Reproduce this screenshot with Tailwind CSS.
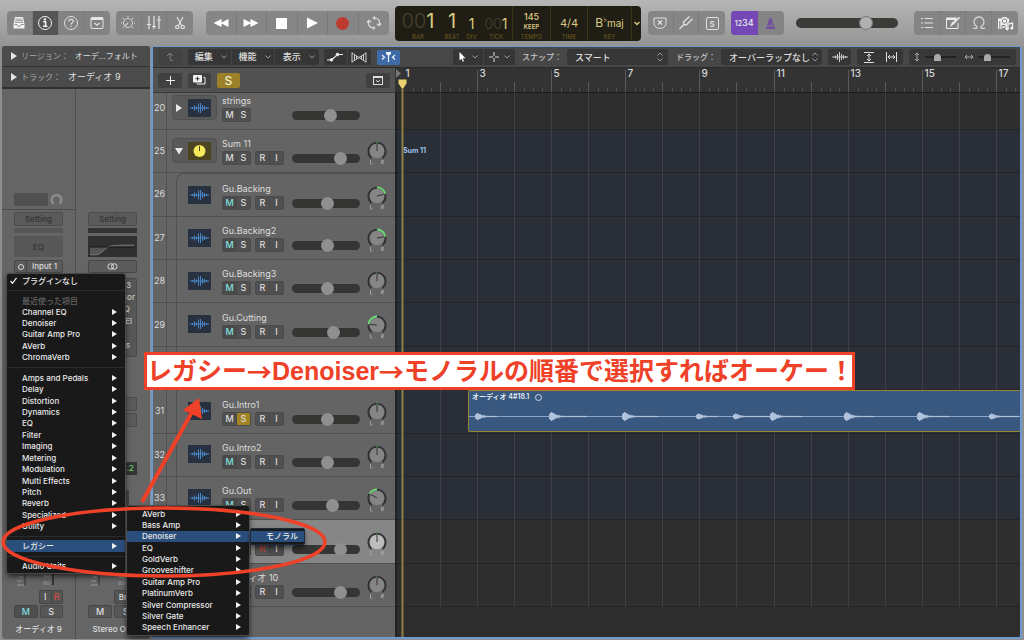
<!DOCTYPE html>
<html lang="ja">
<head>
<meta charset="utf-8">
<title>Logic Pro</title>
<script src="https://cdn.jsdelivr.net/npm/@tailwindcss/browser@4"></script>
</head>
<body class="relative flex min-h-screen flex-col overflow-hidden bg-[#8e8e8e] font-['Inter','Noto_Sans_CJK_JP',sans-serif] text-[#dedede]">

<!-- Control bar -->
<header class="flex h-[46px] shrink-0 items-center bg-linear-to-b from-[#b6b6b6] to-[#949494] pl-[7px] pr-[6px]">
  <div class="grid h-6 w-[103px] grid-cols-4 divide-x divide-[#7b7b7b] overflow-hidden rounded bg-[#838383] text-[#e4e4e4]">
    <button aria-label="ライブラリ" class="grid place-items-center"><svg width="14" height="14" viewBox="0 0 14 14"><path d="M3 1h8l1.500 7v4.500h-11V8z" fill="#f4f4f4"/><path d="M3.500 3h7M3 4.700h8M2.600 6.400h8.800M2 8.500h3q0 2 2 2t2-2h3" fill="none" stroke="#808080" stroke-width=".8"/></svg></button>
    <button aria-label="インスペクタ" class="grid place-items-center bg-[#555]"><svg width="16" height="16" viewBox="0 0 16 16"><circle cx="8" cy="8" r="6.500" fill="none" stroke="#f0f0f0"/><path d="M6.200 6.800h2.400v4.200M6 11.200h4.400" fill="none" stroke="#f4f4f4" stroke-width="1.600"/><circle cx="7.900" cy="4.400" r="1.200" fill="#f4f4f4"/></svg></button>
    <button aria-label="ヘルプ" class="grid place-items-center"><svg width="16" height="16" viewBox="0 0 16 16" fill="none" stroke="#e0e0e0"><circle cx="8" cy="8" r="6.500"/><path d="M5.800 6.500q0-2.200 2.200-2.200t2.200 1.900q0 1-1.100 1.700T8 9.600" stroke-width="1.200"/><path d="M8 10.800v1.300" stroke-width="1.300"/></svg></button>
    <button aria-label="ツールバー" class="grid place-items-center"><svg width="14" height="14" viewBox="0 0 14 14" fill="none" stroke="#e6e6e6"><rect x="1" y="1.500" width="12" height="11" rx="1"/><path d="M1 3h12" stroke-width="2"/><path d="M4.500 7l2.500 2.300L9.500 7" stroke-width="1.200"/></svg></button>
  </div>
  <div class="ml-[6px] grid h-6 w-[77px] grid-cols-3 divide-x divide-[#7b7b7b] rounded bg-[#838383]">
    <button aria-label="Smart Control" class="grid place-items-center"><svg width="18" height="16" viewBox="0 0 18 16" fill="none" stroke="#d8d8d8"><circle cx="9" cy="8" r="4.500"/><path d="M9 8l-3.200 3.200" stroke-width="1.200"/><path d="M2 8h1M15 8h1M4 3l.8.800M14 3l-.8.800M4 13l.8-.8M14 13l-.8-.8M9 1v1" stroke-width="1.200"/></svg></button>
    <button aria-label="ミキサー" class="grid place-items-center"><svg width="16" height="16" viewBox="0 0 16 16" stroke="#e4e4e4" stroke-width="1.200"><path d="M3 1v13M8 1v13M13 1v13M1 9.500h4M6 11.500h4M11 5h4"/></svg></button>
    <button aria-label="エディタ" class="grid place-items-center"><svg width="14" height="14" viewBox="0 0 14 14" fill="none" stroke="#e0e0e0" stroke-width="1.200"><path d="M4 1l4.500 8.500M10 1L5.500 9.500"/><circle cx="4.300" cy="11" r="1.700"/><circle cx="9.700" cy="11" r="1.700"/></svg></button>
  </div>
  <div class="ml-[13px] grid h-6 w-[183px] grid-cols-6 divide-x divide-[#7b7b7b] rounded bg-[#868686]">
    <button aria-label="巻き戻し" class="grid place-items-center"><svg width="16" height="10" viewBox="0 0 16 10" fill="#fff"><path d="M8.500 1v8L.5 5zM15.500 1v8L7.500 5z"/></svg></button>
    <button aria-label="早送り" class="grid place-items-center"><svg width="16" height="10" viewBox="0 0 16 10" fill="#fff"><path d="M.5 1v8l8-4zM7.500 1v8l8-4z"/></svg></button>
    <button aria-label="停止" class="grid place-items-center"><span class="size-[11px] bg-white"></span></button>
    <button aria-label="再生" class="grid place-items-center"><svg width="12" height="12" viewBox="0 0 12 12" fill="#fff"><path d="M1 .5v11L12 6z"/></svg></button>
    <button aria-label="録音" class="grid place-items-center"><span class="size-[13px] rounded-full bg-[#bd3b30]"></span></button>
    <button aria-label="サイクル" class="grid place-items-center"><svg width="16" height="16" viewBox="0 0 16 16" fill="none" stroke="#dcdcdc" stroke-width="1.200"><path d="M8.500 13H7A5 5 0 0 1 2.800 6M7.500 3H9A5 5 0 0 1 13.200 10"/><path d="M1 7.500l1.900-2.200L5 7.300M11 8.700l2.100 2L15 8.500M7 11.500L8.700 13 7 14.500M9 1.500L7.300 3 9 4.500"/></svg></button>
  </div>

  <!-- LCD -->
  <div class="ml-[6px] flex h-[35px] w-[246px] rounded bg-[#201e14] text-center text-[#dccb83]">
    <div class="flex w-[46px] flex-col items-center justify-between pb-[1px]"><span class="h-[27px] text-[20px] leading-[30px]"><span class="font-light text-[#454130]">00</span>1</span><span class="text-[6px] leading-[7px] text-[#6a5a22]">BAR</span></div>
    <div class="flex w-[22px] flex-col items-center justify-between pb-[1px]"><span class="h-[27px] text-[20px] leading-[30px]">1</span><span class="text-[6px] leading-[7px] text-[#6a5a22]">BEAT</span></div>
    <div class="flex w-[17px] flex-col items-center justify-between pb-[1px]"><span class="h-[27px] text-[14px] leading-[35px]">1</span><span class="text-[6px] leading-[7px] text-[#6a5a22]">DIV</span></div>
    <div class="flex w-[32px] flex-col items-center justify-between pb-[1px]"><span class="h-[27px] text-[14px] leading-[35px]"><span class="font-light text-[#454130]">00</span>1</span><span class="text-[6px] leading-[7px] text-[#6a5a22]">TICK</span></div>
    <div class="flex w-[38px] flex-col items-center justify-between border-l border-[#39331a] pb-[1px] pt-[5px]"><span class="text-[9px] font-medium leading-[11px]">145</span><span class="text-[6px] font-semibold leading-[10px]">KEEP</span><span class="text-[6px] leading-[7px] text-[#6a5a22]">TEMPO</span></div>
    <div class="flex w-[37px] flex-col items-center justify-between border-l border-[#39331a] pb-[1px]"><span class="h-[27px] text-[11px] leading-[34px]">4/4</span><span class="text-[6px] leading-[7px] text-[#6a5a22]">TIME</span></div>
    <div class="flex w-[44px] flex-col items-center justify-between border-l border-[#39331a] pb-[1px]"><span class="flex h-[27px] items-baseline text-[12px] leading-[34px]">B<span class="self-start font-['DejaVu_Sans'] text-[8px] leading-[28px]">♭</span><span class="text-[10px]">maj</span></span><span class="text-[6px] leading-[7px] text-[#6a5a22]">KEY</span></div>
    <button aria-label="表示モード" class="grid flex-1 place-items-center border-l border-[#39331a]"><svg width="6" height="5" viewBox="0 0 6 5" fill="none" stroke="#dccb83" stroke-width="1.300"><path d="M.5 1L3 3.500 5.500 1"/></svg></button>
  </div>

  <div class="ml-[7px] grid h-6 w-[77px] grid-cols-3 divide-x divide-[#7b7b7b] rounded bg-[#868686]">
    <button aria-label="置き換え" class="grid place-items-center"><svg width="14" height="14" viewBox="0 0 14 14" fill="none" stroke="#e0e0e0"><path d="M1 2h12v5.500q0 2-2 3.500l-1.500 1.200h-5L3 11Q1 9.500 1 7.500z"/><path d="M5 4.500l4 4M9 4.500l-4 4" stroke-width="1.300"/></svg></button>
    <button aria-label="チューナー" class="grid place-items-center"><svg width="16" height="16" viewBox="0 0 16 16" fill="none" stroke="#e0e0e0" stroke-width="1.300"><path d="M1.500 14L6 9.500M6 9.500L5.500 7l6-5.500M6 9.500l2.500.3 6-6"/></svg></button>
    <button aria-label="ソロ" class="grid place-items-center"><span class="grid size-[13px] place-items-center rounded-[2px] border border-[#e0e0e0] text-[8px] font-semibold">S</span></button>
  </div>
  <div class="ml-[6px] grid h-6 w-[53px] grid-cols-2 overflow-hidden rounded bg-[#848484]">
    <button class="bg-[#7449b5] text-[9px] font-medium text-[#eee]"><span class="text-[7px]">12</span>34</button>
    <button aria-label="メトロノーム" class="grid place-items-center"><svg width="13" height="13" viewBox="0 0 13 13"><path d="M5.500 1h2L11 12H2z" fill="#7050a0"/><path d="M6.500 9L11.500 3.500M3.500 9h6" stroke="#838383"/></svg></button>
  </div>
  <input type="range" aria-label="マスター音量" value="72" class="ml-[12px] h-[10px] w-[102px] appearance-none rounded-full bg-[#3a3c38] [&::-webkit-slider-thumb]:size-[14px] [&::-webkit-slider-thumb]:appearance-none [&::-webkit-slider-thumb]:rounded-full [&::-webkit-slider-thumb]:border [&::-webkit-slider-thumb]:border-[#777] [&::-webkit-slider-thumb]:bg-[#b0b0b0]">
  <div class="ml-auto grid h-6 w-[104px] grid-cols-4 divide-x divide-[#7b7b7b] rounded bg-[#848484]">
    <button aria-label="リスト" class="grid place-items-center"><svg width="14" height="12" viewBox="0 0 14 12" stroke="#e0e0e0" stroke-width="1.200"><path d="M1 1.500h2M4.500 1.500H13M1 6h2M4.500 6H13M1 10.500h2M4.500 10.500H13"/></svg></button>
    <button aria-label="ノートパッド" class="grid place-items-center"><svg width="16" height="14" viewBox="0 0 16 14" fill="none" stroke="#ececec"><path d="M13 7v5.500H1.500V2H12"/><path d="M1.500 3H11" stroke-width="2"/><path d="M14.500 1.500L8 8l-1.500 1 .8-1.800z" stroke-width="1.400"/></svg></button>
    <button aria-label="ループ" class="grid place-items-center"><svg width="14" height="14" viewBox="0 0 14 14" fill="none" stroke="#dcdcdc" stroke-width="1.200"><path d="M1 12.400h3.200q1.500-.8.200-2.200a5 5 0 1 1 5.200 0q-1.300 1.400.2 2.200H13"/></svg></button>
    <button aria-label="ブラウザ" class="grid place-items-center"><svg width="17" height="15" viewBox="0 0 17 15"><path d="M1 2.500h3.500l1-1.500h4l1 1.500H12v4l-2 1V13H1z" fill="#f0f0f0"/><circle cx="7.500" cy="5" r="2.200" fill="none" stroke="#808080"/><path d="M2.800 5v8M5 9.500h3v3H5z" stroke="#808080" fill="none"/><path d="M11 13V8l4.500-1v5" fill="none" stroke="#f0f0f0" stroke-width="1.300"/><circle cx="10.300" cy="13" r="1.400" fill="#f0f0f0"/><circle cx="14.800" cy="12.200" r="1.400" fill="#f0f0f0"/></svg></button>
  </div>
</header>

<div class="flex flex-1 gap-[1px] px-[2px] pb-[1px]">
  <!-- Inspector -->
  <aside class="flex w-[148px] shrink-0 flex-col overflow-hidden rounded-[3px] bg-[#656565] text-[9px]">
    <button class="flex h-[21px] items-center border-b border-[#333] bg-[#4b4b4b] pl-[9px] text-left text-[8px]"><svg width="6" height="8" viewBox="0 0 6 8" fill="#e4e4e4"><path d="M0 0v8l6-4z"/></svg><span class="ml-[4px] text-[#a8a8a8]">リージョン：</span><span class="ml-[6px]">オーデ…フォルト</span></button>
    <button class="flex h-[22px] items-center border-b-2 border-[#303030] bg-[#4b4b4b] pl-[9px] text-left text-[8px]"><svg width="6" height="8" viewBox="0 0 6 8" fill="#e4e4e4"><path d="M0 0v8l6-4z"/></svg><span class="ml-[4px] text-[#a8a8a8]">トラック：</span><span class="ml-[7px] text-[9px]">オーディオ 9</span></button>
    <div class="flex flex-1 font-medium">
      <section class="flex w-[74px] flex-col border-r border-[#505050]">
        <div class="flex h-[121px] items-end gap-[2px] border-b border-[#4c4c4c] pb-[3px] pl-[12px]"><span class="h-[13px] w-[34px] rounded-[1px] bg-[#505050]"></span><svg width="13" height="13" viewBox="0 0 13 13" fill="none" stroke="#8d8d8d" stroke-width="2.500"><path d="M3.500 10.500a4.800 4.800 0 1 1 6 0"/></svg></div>
        <div class="flex flex-1 flex-col px-[12px] pt-[2px]">
          <button class="h-[14px] w-[49px] rounded-[2px] border border-[#4c4c4c] bg-[#5a5a5a] text-[8px] leading-3 text-[#343434]">Setting</button>
          <span class="mt-[2px] h-[5px] w-[49px] bg-[#575757]"></span>
          <button class="mt-[3px] h-[21px] w-[49px] rounded-[1px] bg-[#575757] text-[8px] text-[#333]">EQ</button>
          <div class="mt-[3px] flex h-[13px] w-[49px] rounded-[2px] border border-[#474747] bg-[#5b5b5b] text-[8px] leading-[11px]"><button aria-label="フォーマット" class="grid w-[12px] place-items-center border-r border-[#474747]"><span class="size-[6px] rounded-full border border-[#ddd]"></span></button><button class="flex-1">Input 1</button></div>
          <div class="mt-auto flex h-[17px] justify-between pl-[2px] pr-[9px]">
            <svg width="10" height="13" viewBox="0 0 10 13" stroke="#999"><path d="M3 4h4M1 8h5M1 12h7"/><path d="M9 0v12" stroke="#333"/></svg>
            <span class="flex"><span class="text-[5px] leading-[7px] text-[#999]">50-<br>60-</span><span class="h-3 w-[2px] bg-[#333]"></span></span>
          </div>
          <div class="flex h-[14px] w-[24px] self-end rounded-[2px] border border-[#464646] bg-[#545454] leading-3"><button class="flex-1 border-r border-[#464646]">I</button><button class="flex-1 text-[#d5493e]">R</button></div>
          <div class="mt-[1px] flex gap-[2px]"><button class="h-[13px] w-[24px] rounded-[2px] border border-[#464646] bg-[#4e4e4e] leading-[11px] text-[#7fdcdc]">M</button><button class="h-[13px] w-[24px] rounded-[2px] border border-[#4a4a4a] bg-[#565656] leading-[11px]">S</button></div>
          <span class="mb-[3px] mt-[4px] whitespace-nowrap text-center text-[8px] leading-[14px]">オーディオ 9</span>
        </div>
      </section>
      <section class="flex w-[74px] flex-col px-[12px] pt-[123px]">
        <button class="h-[14px] w-[49px] rounded-[2px] border border-[#4c4c4c] bg-[#5a5a5a] text-[8px] leading-3 text-[#343434]">Setting</button>
        <span class="mt-[2px] h-[5px] w-[49px] bg-[#333]"></span>
        <svg class="mt-[3px] bg-[#303030]" width="49" height="21" viewBox="0 0 49 21"><path d="M2 18.500Q10 20 14 16T21 10.500 46 9V11H2z" fill="#555"/><path d="M2 18.500Q10 20 14 16T21 10.500 46 9" fill="none" stroke="#777"/><path d="M2 11h44" stroke="#151515"/></svg>
        <button aria-label="ステレオ" class="mt-[3px] grid h-[13px] w-[49px] place-items-center rounded-[2px] border border-[#474747] bg-[#5b5b5b]"><svg width="11" height="7" viewBox="0 0 11 7" fill="none" stroke="#ddd"><circle cx="3.700" cy="3.500" r="2.800"/><circle cx="7.300" cy="3.500" r="2.800"/></svg></button>
        <div class="mt-[5px] grid h-[79px] w-[49px] grid-rows-[repeat(6,12px)_5px] overflow-hidden rounded-[2px] border border-[#474747] bg-[#575757] pr-[1px] text-right text-[8px] leading-3 text-[#ccc]"><span class="pr-[4px]">3</span><span>sor</span><span class="pr-[5px]">Q</span><span class="pr-[3px]">El</span><span class="pr-[9px]">t</span><span class="pr-[5px]">s</span></div>
        <span class="mt-[40px] h-[14px] w-[49px] rounded-[2px] border border-[#4c4c4c] bg-[#5a5a5a]"></span>
        <span class="mt-[2px] h-[14px] w-[49px] rounded-[2px] border border-[#4c4c4c] bg-[#5a5a5a]"></span>
        <span class="mt-[35px] h-[13px] w-[49px] bg-[#333] pr-[3px] text-right text-[8px] leading-[13px] text-[#6fd06a]">.2</span>
        <span class="ml-[38px] mt-[15px] w-[3px] flex-1 bg-[#444]"></span>
        <div class="mt-[8px] flex h-[17px] justify-between pl-[2px] pr-[9px]">
          <svg width="10" height="13" viewBox="0 0 10 13" stroke="#999"><path d="M3 4h4M1 8h5M1 12h7"/><path d="M9 0v12" stroke="#333"/></svg>
          <span class="flex"><span class="text-[5px] leading-[7px] text-[#999]">50-<br>60-</span><span class="h-3 w-[2px] bg-[#333]"></span></span>
        </div>
        <button class="h-[14px] w-[24px] self-end rounded-[2px] border border-[#464646] bg-[#545454] text-[8px] leading-3">Bnc</button>
        <div class="mt-[1px] flex gap-[2px]"><button class="h-[13px] w-[24px] rounded-[2px] border border-[#464646] bg-[#565656] leading-[11px]">M</button><button class="h-[13px] w-[24px] rounded-[2px] border border-[#4a4a4a] bg-[#565656] leading-[11px]">S</button></div>
        <span class="mb-[3px] mt-[4px] whitespace-nowrap text-center text-[8px] leading-[14px]">Stereo Out</span>
      </section>
    </div>
  </aside>

  <!-- Tracks area -->
  <main class="flex min-w-0 flex-1 flex-col rounded-[3px] border-2 border-t border-[#6f9bd3] bg-[#2d2d2d]">
    <div class="flex h-[21px] shrink-0 items-center border-b border-[#2c2c2c] bg-[#474747] pl-[5px] pr-[4px] text-[9px] font-medium">
      <button aria-label="上の階層へ" class="grid h-[16px] w-[24px] place-items-center rounded-[3px] bg-[#424242]"><svg width="9" height="10" viewBox="0 0 9 10" fill="none" stroke="#808080"><path d="M1 4l3-3 3 3M4 1v5q0 3 3 3"/></svg></button>
      <div class="ml-[6px] grid h-[16px] w-[131px] grid-cols-3 divide-x divide-[#444] rounded-[3px] bg-[#363636]">
        <button class="flex items-center justify-center gap-[8px] pl-[3px]">編集<svg width="6" height="4" viewBox="0 0 6 4" fill="none" stroke="#999"><path d="M.5.500L3 3 5.500.500"/></svg></button>
        <button class="flex items-center justify-center gap-[8px] pl-[3px]">機能<svg width="6" height="4" viewBox="0 0 6 4" fill="none" stroke="#999"><path d="M.5.500L3 3 5.500.500"/></svg></button>
        <button class="flex items-center justify-center gap-[8px] pl-[3px]">表示<svg width="6" height="4" viewBox="0 0 6 4" fill="none" stroke="#999"><path d="M.5.500L3 3 5.500.500"/></svg></button>
      </div>
      <div class="ml-[5px] grid h-[16px] w-[47px] grid-cols-2 divide-x divide-[#444] rounded-[3px] bg-[#363636]">
        <button aria-label="オートメーション" class="grid place-items-center"><svg width="16" height="10" viewBox="0 0 16 10" fill="#eee" stroke="#eee"><path d="M0 8h4.500l6-5.500H16" fill="none" stroke-width="1.200"/><circle cx="4.500" cy="7.800" r="1.300"/><circle cx="10.500" cy="2.500" r="1.300"/></svg></button>
        <button aria-label="フレックス" class="grid place-items-center"><svg width="16" height="11" viewBox="0 0 16 11" fill="none" stroke="#ccc"><path d="M1 .5v10M15 .5v10M1 1l14 9M1 10L15 1M3.500 3v5M12.500 3v5M5.500 4v3M10.500 4v3"/></svg></button>
      </div>
      <button aria-label="キャッチ" class="ml-[6px] grid h-[15px] w-[23px] place-items-center rounded-[2px] bg-[#3e6ba8]"><svg width="15" height="10" viewBox="0 0 15 10" fill="none" stroke="#eef3fa" stroke-width="1.200"><path d="M1 3l2.500 2.200L1 7.500M14 3l-2.500 2.200L14 7.500M7.500 2v8"/><path d="M5 0h5v2L7.500 4 5 2z" fill="#eef3fa" stroke="none"/></svg></button>
      <div class="ml-[53px] grid h-[16px] w-[62px] grid-cols-2 divide-x divide-[#444] rounded-[3px] bg-[#363636]">
        <button aria-label="ポインタツール" class="flex items-center justify-center gap-[6px]"><svg width="7" height="10" viewBox="0 0 7 10" fill="#fff"><path d="M.5 0v8.500l2-1.800 1.300 3 1.200-.5-1.300-3h2.800z"/></svg><svg width="6" height="4" viewBox="0 0 6 4" fill="none" stroke="#999"><path d="M.5.500L3 3 5.500.500"/></svg></button>
        <button aria-label="マーキーツール" class="flex items-center justify-center gap-[5px]"><svg width="10" height="10" viewBox="0 0 10 10" stroke="#ddd"><path d="M5 0v4M5 6v4M0 5h4M6 5h4"/></svg><svg width="6" height="4" viewBox="0 0 6 4" fill="none" stroke="#999"><path d="M.5.500L3 3 5.500.500"/></svg></button>
      </div>
      <label for="snap" class="ml-[7px] w-[45px] whitespace-nowrap text-[8px] text-[#c8c8c8]">スナップ：</label>
      <div class="relative w-[101px]"><select id="snap" class="h-[16px] w-full appearance-none rounded-[3px] bg-[#363636] pl-[8px] leading-none"><option>スマート</option></select><svg class="absolute right-[5px] top-[3px]" width="6" height="10" viewBox="0 0 6 10" fill="none" stroke="#999"><path d="M.5 3.500L3 1l2.500 2.500M.5 6.500L3 9l2.500-2.500"/></svg></div>
      <label for="drag" class="ml-[8px] w-[45px] whitespace-nowrap text-[8px] text-[#c8c8c8]">ドラッグ：</label>
      <div class="relative w-[101px]"><select id="drag" class="h-[16px] w-full appearance-none rounded-[3px] bg-[#363636] pl-[8px] leading-none"><option>オーバーラップなし</option></select><svg class="absolute right-[4px] top-[3px]" width="6" height="10" viewBox="0 0 6 10" fill="none" stroke="#999"><path d="M.5 3.500L3 1l2.500 2.500M.5 6.500L3 9l2.500-2.500"/></svg></div>
      <button aria-label="波形ズーム" class="ml-[6px] grid h-[16px] w-[23px] place-items-center rounded-[3px] bg-[#363636]"><svg width="16" height="10" viewBox="0 0 16 10" stroke="#ccc"><path d="M0 5h16M3.500 3.500v3M5.500 2v6M7.500 0v10M9.500 2v6M11.500 3v4M13.500 4v2"/></svg></button>
      <div class="ml-[6px] grid h-[16px] w-[46px] grid-cols-2 rounded-[3px] bg-[#363636]">
        <button aria-label="縦方向に合わせる" class="grid place-items-center"><svg width="10" height="11" viewBox="0 0 10 11" fill="none" stroke="#ddd"><path d="M0 .5h10M0 10.500h10M5 2v7M3 4l2-2 2 2M3 7l2 2 2-2"/></svg></button>
        <button aria-label="横方向に合わせる" class="grid place-items-center"><svg width="11" height="10" viewBox="0 0 11 10" fill="none" stroke="#ddd"><path d="M.5 0v10M10.500 0v10M2 5h7M4 3L2 5l2 2M7 3l2 2-2 2"/></svg></button>
      </div>
      <div class="ml-auto flex h-[16px] w-[107px] items-center rounded-[3px] bg-[#383838] px-[5px]">
        <svg width="6" height="10" viewBox="0 0 6 10" fill="none" stroke="#aaa"><path d="M1 3l2-2 2 2M3 1v8M1 7l2 2 2-2"/></svg>
        <input type="range" aria-label="縦ズーム" value="38" class="ml-[5px] h-[2px] w-[31px] appearance-none bg-[#222] [&::-webkit-slider-thumb]:h-[7px] [&::-webkit-slider-thumb]:w-[7px] [&::-webkit-slider-thumb]:appearance-none [&::-webkit-slider-thumb]:rounded-t-full [&::-webkit-slider-thumb]:bg-[#aaa]">
        <svg class="ml-[8px]" width="10" height="6" viewBox="0 0 10 6" fill="none" stroke="#aaa"><path d="M3 1L1 3l2 2M1 3h8M7 1l2 2-2 2"/></svg>
        <input type="range" aria-label="横ズーム" value="25" class="ml-[4px] h-[2px] w-[32px] appearance-none bg-[#222] [&::-webkit-slider-thumb]:h-[7px] [&::-webkit-slider-thumb]:w-[7px] [&::-webkit-slider-thumb]:appearance-none [&::-webkit-slider-thumb]:rounded-t-full [&::-webkit-slider-thumb]:bg-[#aaa]">
      </div>
    </div>

    <div class="flex min-h-0 flex-1">
      <!-- Track headers -->
      <div class="flex w-[242px] shrink-0 flex-col bg-[#646464]">
        <div class="flex h-[25px] shrink-0 items-center border-b border-[#3a3a3a] bg-[#525252] px-[5px]">
          <button aria-label="トラックを追加" class="grid h-[15px] w-[24px] place-items-center rounded-[3px] bg-[#404040]"><svg width="9" height="9" viewBox="0 0 9 9" stroke="#eee"><path d="M4.500 0v9M0 4.500h9"/></svg></button>
          <button aria-label="トラックを複製" class="ml-[6px] grid h-[15px] w-[23px] place-items-center rounded-[3px] bg-[#404040]"><svg width="13" height="10" viewBox="0 0 13 10"><rect x="0" y="0" width="9" height="7.500" rx="1" fill="#f0f0f0"/><path d="M10.500 2.500H12v6.500H4V8.500" fill="none" stroke="#eee"/><path d="M4.500 1.700v4M2.500 3.700h4" stroke="#333"/></svg></button>
          <button class="ml-[6px] h-[15px] w-[23px] rounded-[2px] bg-[#9a8129] text-[12px] font-medium leading-[15px] text-[#f0ead0]">S</button>
          <button aria-label="トラックヘッダを設定" class="ml-auto grid h-[15px] w-[24px] place-items-center rounded-[3px] bg-[#404040]"><svg width="10" height="9" viewBox="0 0 10 9" fill="none" stroke="#ddd"><rect x=".5" y=".5" width="9" height="8"/><path d="M0 1.500h10M3 4.200L5 6l2-1.800"/></svg></button>
        </div>
        <div id="tracks" class="grid grid-rows-[37px_repeat(11,calc(477px/11))]"></div>
      </div>

      <!-- Timeline -->
      <div class="relative flex min-w-0 flex-1 flex-col overflow-hidden">
        <svg id="ruler" class="block h-[25px] w-full shrink-0 bg-[#333] font-['Inter',sans-serif] text-[10px] font-medium"></svg>
        <div id="lanes" class="grid grid-rows-[37px_repeat(11,calc(477px/11))] text-[7px] font-bold"></div>
        <svg id="grid" class="absolute left-0 top-0 h-full w-full"></svg>
        <div class="absolute left-[73px] right-0 top-[322px] h-[42px] rounded-l-[2px] border border-r-0 border-[#97852f] bg-[#39587f]">
          <div class="flex h-[13px] items-center gap-[6px] pl-[3px] text-[7px] font-semibold text-[#e6ecf4]">オーディオ 4#18.1<span class="size-[7px] rounded-full border border-[#d0d8e4]"></span></div>
          <svg id="wave" class="absolute left-0 top-0 h-full w-full"></svg>
        </div>
      </div>
    </div>
  </main>
</div>

<!-- Plug-in menus -->
<nav aria-label="プラグイン" class="absolute left-[6px] top-[273px] flex h-[301px] w-[120px] flex-col rounded-[3px] border border-[#4a4a4a] bg-[#191919] text-[8px] font-medium text-[#e8e8e8] shadow-md shadow-black/50">
  <button class="flex h-[13px] items-center pl-[3px]"><svg width="7" height="7" viewBox="0 0 7 7" fill="none" stroke="#eee" stroke-width="1.300"><path d="M.5 4l2 2.300L6.500.800"/></svg><span class="ml-[5px]">プラグインなし</span></button>
  <hr class="mt-[3px] border-[#2c2c2c]">
  <span class="mt-[4px] flex h-[11px] items-center pl-[15px] text-[#636363]">最近使った項目</span>
  <div class="menu grid h-[57px] auto-rows-fr" data-items="Channel EQ|Denoiser|Guitar Amp Pro|AVerb|ChromaVerb"></div>
  <hr class="mb-[4px] mt-[4px] border-[#2c2c2c]">
  <div class="menu grid h-[160px] auto-rows-fr" data-items="Amps and Pedals|Delay|Distortion|Dynamics|EQ|Filter|Imaging|Metering|Modulation|Multi Effects|Pitch|Reverb|Specialized|Utility"></div>
  <hr class="mb-[3px] mt-[4px] border-[#2c2c2c]">
  <div class="menu grid h-[12px] auto-rows-fr" data-items="*レガシー"></div>
  <hr class="mb-[3px] mt-[4px] border-[#2c2c2c]">
  <div class="menu grid h-[12px] auto-rows-fr" data-items="Audio Units"></div>
</nav>
<nav aria-label="レガシー" class="absolute left-[126px] top-[505px] w-[124px] rounded-[3px] border border-[#4a4a4a] bg-[#191919] py-[2px] text-[8px] font-medium text-[#e8e8e8] shadow-md shadow-black/50">
  <div class="menu grid h-[125px] auto-rows-fr" data-items="AVerb|Bass Amp|*Denoiser|EQ|GoldVerb|Grooveshifter|Guitar Amp Pro|PlatinumVerb|Silver Compressor|Silver Gate|Speech Enhancer"></div>
</nav>
<nav aria-label="Denoiser" class="absolute left-[250px] top-[528px] w-[55px] rounded-[2px] border border-[#1c2a3c] bg-[#191919] py-[2px] text-[8px] font-medium shadow-md shadow-black/50">
  <button class="block h-[11px] w-full bg-[#2b4f7c] pl-[15px] text-left leading-[11px] text-[#eee]">モノラル</button>
</nav>

<!-- Annotations -->
<svg class="pointer-events-none absolute left-0 top-0" width="340" height="600" fill="none" stroke="#ee4128"><ellipse cx="164" cy="542" rx="161" ry="34" stroke-width="3.500"/><path d="M142 502l50-90" stroke-width="4"/><path d="M199 398l-16 12 19 9z" fill="#ee4128" stroke="none"/></svg>
<p class="absolute left-[144px] top-[352px] flex h-[38px] w-[711px] items-center whitespace-nowrap border-[3px] border-[#ee4128] bg-white font-['Liberation_Sans','Noto_Sans_CJK_JP',sans-serif] text-[25px] font-bold leading-none text-[#ee4128]">レガシー<span class="font-['Noto_Sans_CJK_JP'] leading-none">→</span>Denoiser<span class="font-['Noto_Sans_CJK_JP'] leading-none">→</span>モノラルの順番で選択すればオーケー！</p>

<script>
// Menu rows; a leading * marks the highlighted item.
for (const m of document.querySelectorAll('.menu')) {
  m.innerHTML = m.dataset.items.split('|').map(t => {
    const on = t[0] === '*';
    return `<button class="flex min-h-0 items-center justify-between pl-[15px] pr-[8px] leading-none whitespace-nowrap ${on ? 'bg-[#2b4f7c]' : ''}">${on ? t.slice(1) : t}<svg width="5" height="6" viewBox="0 0 5 6" fill="#f0f0f0"><path d="M0 0v6l5-3z"/></svg></button>`;
  }).join('');
}

// no, name, buttons, slider value, pan angle, mute/solo state
const tracks = [
  ['20', 'strings', 'MS', 59, null, ''],
  ['25', 'Sum 11', 'MSRI', 76, 0, ''],
  ['26', 'Gu.Backing', 'MSRI', 53, 75, 'M'],
  ['27', 'Gu.Backing2', 'MSRI', 53, 80, 'M'],
  ['28', 'Gu.Backing3', 'MSRI', 53, 0, 'M'],
  ['29', 'Gu.Cutting', 'MSRI', 64, -85, 'M'],
  null,
  ['31', 'Gu.Intro1', 'MSRI', 53, 0, 'S'],
  ['32', 'Gu.Intro2', 'MSRI', 53, 0, 'M'],
  ['33', 'Gu.Out', 'MSRI', 62, -60, 'M'],
  ['34', 'オーディオ 9', 'MSRI', 76, 0, 'R'],
  ['35', 'オーディオ 10', 'MSRI', 76, 0, '']
];
const waveIcon = '<svg class="bg-[#27313f]" width="23" height="18" viewBox="0 0 23 18" stroke="#4a86c4"><path d="M2 9h19M4.500 8v2M6.500 6.500v5M8.500 7.500v3M10.500 4.500v9M12.500 4v10M14.500 6v6M16.500 7v4M18.500 8v2"/></svg>';
const powerIcon = '<svg class="bg-[#4a4520]" width="23" height="18" viewBox="0 0 23 18"><circle cx="11.500" cy="9" r="6" fill="#f6e95c"/><path d="M11.500 4v5" stroke="#4a4520"/></svg>';

function pan(a, selected) {
  const r = a * Math.PI / 180, x = 11 + 8.500 * Math.sin(r), y = 11 - 8.500 * Math.cos(r);
  return `<svg width="22" height="26" viewBox="0 0 22 26" fill="none"><path d="M5.500 18A8.600 8.600 0 1 1 16.500 18" stroke="#333" stroke-width="2"/><circle cx="11" cy="11" r="7.300" fill="${selected ? '#bdbdbd' : '#858585'}"/>${a ? `<path d="M11 2.500A8.500 8.500 0 0 ${a > 0 ? 1 : 0} ${x} ${y}" stroke="#6fd878" stroke-width="2"/>` : '<path d="M11 1v3" stroke="#4c8a4c"/>'}<path d="M11 11L${11 + 7 * Math.sin(r)} ${11 - 7 * Math.cos(r)}" stroke="#333"/><path d="M4.500 20v4h2M15.500 24v-3.500h2v1.800h-2l2 1.700" stroke="#aaa" stroke-width=".8"/></svg>`;
}
function btn(c, s) {
  let cls = 'bg-[#505050]';
  if (s === c && c === 'M') cls = 'bg-[#4a4a4a] text-[#7fe0dc]';
  if (s === c && c === 'S') cls = 'bg-[#a08424]';
  if (s === c && c === 'R') cls = 'bg-[#555] text-[#d0453a]';
  return `<button class="w-[13px] text-center ${cls}">${c}</button>`;
}
const pair = (p, s) => `<div class="flex h-[14px] gap-px overflow-hidden rounded-[2px] border border-[#4a4a4a] bg-[#484848] text-[9px] font-medium leading-[12px]">${btn(p[0], s)}${btn(p[1], s)}</div>`;

document.getElementById('tracks').innerHTML = tracks.map((t, i) => {
  if (!t) return '<div class="flex border-b border-[#505050]"><span class="w-[14px] border-r border-[#505050]"></span><span class="ml-[9px] border-l border-[#505050]"></span></div>';
  const [no, name, b, v, p, s] = t;
  const top = i < 2, child = i > 1 && i < 10;
  return `<div class="flex min-h-0 items-end overflow-hidden border-b border-[#505050] ${no === '34' ? 'bg-[#868686]' : ''}">
    <div class="flex h-[43px] w-full shrink-0">
      <span class="grid w-[14px] place-items-center border-r border-[#505050] text-[9px]">${no}</span>
      <div class="ml-[9px] flex flex-1 ${child ? 'border-l border-[#505050]' : 'border-l border-transparent'} ${i === 2 ? 'rounded-tl-[8px] border-t' : ''}">
        <div class="-ml-[5px] flex h-[25px] w-[45px] self-center items-center justify-end gap-[5px] rounded-[4px] pr-[5px] ${top ? 'border border-[#505050] bg-[#595959]' : 'border border-transparent'}">
          ${top ? `<button aria-label="${name} の開閉"><svg width="8" height="8" viewBox="0 0 8 8" fill="#e8e8e8">${i ? '<path d="M0 1h8L4 7.500z"/>' : '<path d="M1 0v8l6-4z"/>'}</svg></button>` : ''}${i === 1 ? powerIcon : waveIcon}
        </div>
        <div class="ml-[5px] flex w-[70px] flex-col pt-[8px]">
          <span class="whitespace-nowrap text-[9px] leading-[13px]">${name}</span>
          <div class="mt-[1px] flex gap-[4px]">${pair('MS', s)}${b === 'MSRI' ? pair('RI', s) : ''}</div>
        </div>
        <input type="range" aria-label="${name} 音量" value="${v}" class="mt-[25px] h-[9px] w-[68px] appearance-none rounded-full bg-[#353633] [&::-webkit-slider-thumb]:size-[13px] [&::-webkit-slider-thumb]:appearance-none [&::-webkit-slider-thumb]:rounded-full [&::-webkit-slider-thumb]:bg-[#8f8f8f]">
        <span class="ml-[6px] mt-[11px]">${p === null ? '' : pan(p, no === '34')}</span>
      </div>
    </div></div>`;
}).join('');

document.getElementById('lanes').innerHTML = tracks.map((t, i) =>
  `<div class="flex items-center border-b border-black/20 pl-[8px] text-[#9cc4ee] ${i > 0 && i < 10 ? 'bg-[#2a2e36]' : 'bg-[#2e2e2e]'}">${i === 1 ? 'Sum 11' : ''}</div>`).join('');

// Ruler: one bar is 37.05px wide, bar 1 sits 8px from the left edge.
const bar = 37.05, x0 = 8, bars = 17;
let r = '', g = '';
for (let n = 0; n < bars; n++) {
  const x = Math.round(x0 + n * bar) + .5;
  if (n) r += `<path d="M${x} ${n % 2 ? 14 : 2}V25" stroke="#5a5a5a"/>`;
  for (let q = 1; q < 4; q++) r += `<path d="M${Math.round(x + q * bar / 4) + .5} 20v4" stroke="#505050"/>`;
  if (n % 2 === 0) r += `<text x="${x + 2}" y="9" fill="#d8d8d8">${n + 1}</text>`;
  if (n) g += `<path d="M${x} 25V539" stroke="#fff" stroke-opacity=".09"/>`;
}
document.getElementById('ruler').innerHTML = `${r}<path d="M1 1l5 4.500-5 4.500z" fill="#777"/><path d="M0 24.500h3000" stroke="#1c1c1c"/>`;
document.getElementById('grid').innerHTML = `<path d="M0 25h2v3000H0z" fill="#000" fill-opacity=".25"/>${g}<path d="M7.500 20V3000" stroke="#8f8046" stroke-width="2"/><path d="M3.500 11.500h8v4L8.500 20h-2l-3-4.500z" fill="#e8d070"/>`;

// Audio hits: start, length, peak; each decays with a slightly ragged edge.
const hits = [[8, 22, 3.500], [82, 38, 4.500], [155, 36, 4.500], [229, 22, 3], [266, 42, 3], [303, 32, 4.500], [377, 30, 4.500], [450, 32, 4.500], [522, 30, 3]];
const rag = [1, .7, .9, .6, .8, .5, .9, .65];
document.getElementById('wave').innerHTML = '<path d="M0 25.500h3000" stroke="#8ba3c6"/>' + hits.map(([x, l, h]) => {
  let d = '';
  for (let i = 0; i < l; i++) {
    const k = i < 2 ? .6 + i * .2 : Math.exp(-(i - 2) / 7) * (i > 5 ? rag[i % 8] : 1);
    d += `M${x + i - 1.500} ${25.500 - Math.max(.6, h * k)}V${25.500 + Math.max(.6, h * k)}`;
  }
  return `<path d="${d}" stroke="#b0c1dc"/>`;
}).join('');
</script>
</body>
</html>
